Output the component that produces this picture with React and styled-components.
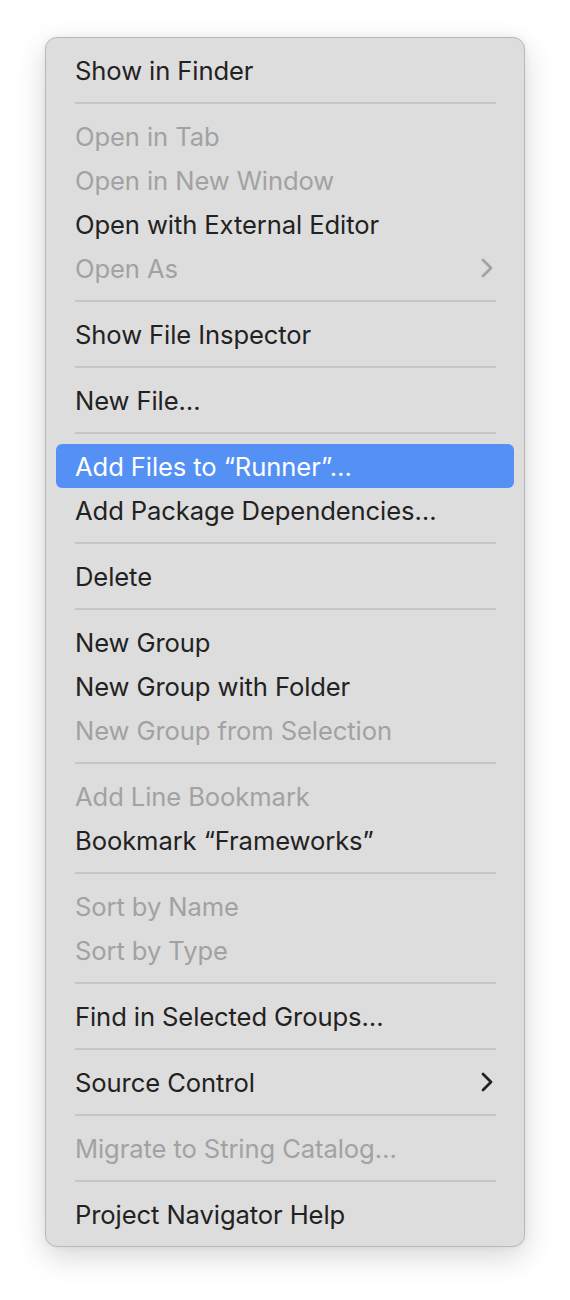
import React from "react";
import styled, { createGlobalStyle } from "styled-components";

const Global = createGlobalStyle`
  html, body { margin: 0; padding: 0; background: #ffffff; }
  body { font-family: Inter, "Noto Sans", "Liberation Sans", sans-serif; -webkit-font-smoothing: antialiased; }
`;

const Page = styled.div`
  padding: 37px 45px 40px 45px;
`;

const Menu = styled.div`
  width: 478px;
  box-sizing: content-box;
  padding: 10px 0;
  background: #dddddd;
  border: 1px solid #b9b9b9;
  border-radius: 12px;
  box-shadow: 0 10px 30px rgba(0, 0, 0, 0.16), 0 0 6px rgba(0, 0, 0, 0.06);
  display: flex;
  flex-direction: column;
`;

const Item = styled.div`
  height: 44px;
  margin: 0 10px;
  padding: 0 20px 0 19px;
  border-radius: 6px;
  display: flex;
  align-items: center;
  justify-content: space-between;
  font-size: 25.6px;
  letter-spacing: -0.1px;
  color: ${(p) => (p.$active ? "#ffffff" : p.$disabled ? "#a2a2a2" : "#222222")};
  background: ${(p) => (p.$active ? "#5591f5" : "transparent")};
`;

const Label = styled.span`
  padding-top: 0px;
`;

const Separator = styled.div`
  height: 22px;
  display: flex;
  align-items: center;
  padding: 0 28px 0 29px;
  &::after {
    content: "";
    flex: 1;
    height: 2px;
    background: #c6c6c6;
  }
`;

const Chevron = ({ color }) => (
  <svg width="14" height="20" viewBox="0 0 14 20" fill="none">
    <path d="M3 2 L11 10 L3 18" stroke={color} strokeWidth="2.8" strokeLinecap="round" strokeLinejoin="round" />
  </svg>
);

const groups = [
  [{ t: "Show in Finder" }],
  [
    { t: "Open in Tab", d: true },
    { t: "Open in New Window", d: true },
    { t: "Open with External Editor" },
    { t: "Open As", d: true, sub: true },
  ],
  [{ t: "Show File Inspector" }],
  [{ t: "New File…" }],
  [{ t: "Add Files to \u201CRunner\u201D…", a: true }, { t: "Add Package Dependencies…" }],
  [{ t: "Delete" }],
  [
    { t: "New Group" },
    { t: "New Group with Folder" },
    { t: "New Group from Selection", d: true },
  ],
  [{ t: "Add Line Bookmark", d: true }, { t: "Bookmark \u201CFrameworks\u201D" }],
  [
    { t: "Sort by Name", d: true },
    { t: "Sort by Type", d: true },
  ],
  [{ t: "Find in Selected Groups…" }],
  [{ t: "Source Control", sub: true }],
  [{ t: "Migrate to String Catalog…", d: true }],
  [{ t: "Project Navigator Help" }],
];

export default function App() {
  return (
    <Page>
      <Global />
      <Menu>
        {groups.map((g, gi) => (
          <React.Fragment key={gi}>
            {gi > 0 && <Separator />}
            {g.map((it) => (
              <Item key={it.t} $disabled={it.d} $active={it.a}>
                <Label>{it.t}</Label>
                {it.sub && <Chevron color={it.d ? "#a2a2a2" : "#222222"} />}
              </Item>
            ))}
          </React.Fragment>
        ))}
      </Menu>
    </Page>
  );
}
